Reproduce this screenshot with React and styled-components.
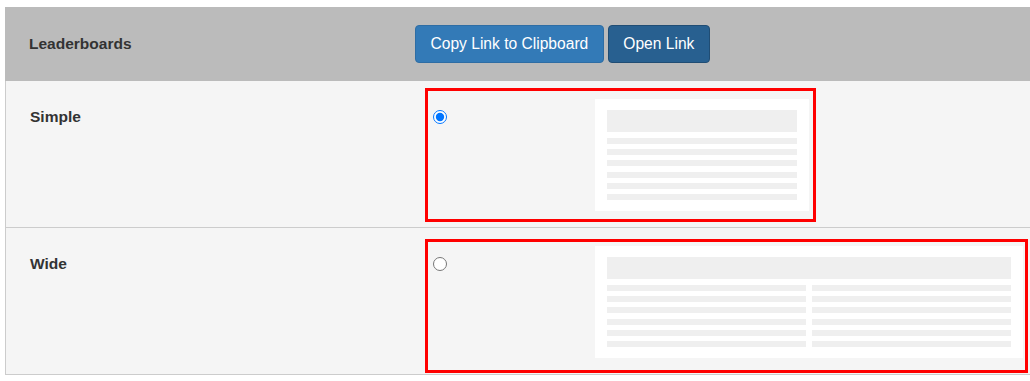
import React, { useState } from "react";
import styled, { createGlobalStyle } from "styled-components";

const GlobalStyle = createGlobalStyle`
  body {
    margin: 0;
    background: #fff;
    font-family: "Liberation Sans", Arial, sans-serif;
    color: #333;
  }
`;

const Page = styled.div`
  padding: 7px 0 0 5px;
`;

const Header = styled.div`
  display: grid;
  grid-template-columns: 410px 1fr;
  align-items: center;
  height: 74px;
  background: #bbbbbb;
`;

const HeaderTitle = styled.div`
  padding-left: 24px;
  font-size: 15.5px;
  font-weight: bold;
`;

const ButtonBar = styled.div`
  display: flex;
  gap: 4px;
`;

const Button = styled.button`
  height: 38px;
  padding: 0 14.5px;
  font-family: "Liberation Sans", Arial, sans-serif;
  font-size: 15.6px;
  color: #fff;
  background: ${(p) => (p.$active ? "#286090" : "#337ab7")};
  border: 1px solid ${(p) => (p.$active ? "#204d74" : "#2e6da4")};
  border-radius: 4px;
  cursor: pointer;
`;

const Row = styled.div`
  display: grid;
  grid-template-columns: 419px 1fr;
  align-items: start;
  height: 146px;
  background: #f5f5f5;
  border-left: 1px solid #ccc;
  border-bottom: 1px solid #ccc;
`;

const RowLabel = styled.div`
  padding: 26px 0 0 24px;
  font-size: 15.5px;
  line-height: 20px;
  font-weight: bold;
`;

const Option = styled.label`
  box-sizing: border-box;
  display: grid;
  grid-template-columns: 167px auto;
  align-items: start;
  width: ${(p) => p.$width}px;
  height: 134px;
  margin-top: ${(p) => p.$top}px;
  padding-top: ${(p) => p.$pad}px;
  border: 3px solid #ff0000;
  cursor: pointer;
`;

const Radio = styled.input`
  width: 14px;
  height: 14px;
  margin: 11px 0 0 4.5px;
`;

const Preview = styled.div`
  box-sizing: border-box;
  width: ${(p) => p.$width}px;
  height: 112px;
  padding: 11px 12px;
  background: #fff;
`;

const PreviewHead = styled.div`
  height: 22px;
  margin-bottom: 6px;
  background: #efefef;
`;

const PreviewBody = styled.div`
  display: grid;
  grid-template-columns: repeat(${(p) => p.$cols}, 1fr);
  column-gap: 6px;
`;

const PreviewCol = styled.div`
  display: flex;
  flex-direction: column;
  gap: 5.2px;
`;

const Line = styled.div`
  height: 6px;
  background: #efefef;
`;

function LayoutPreview({ width, cols }) {
  return (
    <Preview $width={width}>
      <PreviewHead />
      <PreviewBody $cols={cols}>
        {Array.from({ length: cols }).map((_, c) => (
          <PreviewCol key={c}>
            {Array.from({ length: 6 }).map((_, i) => (
              <Line key={i} />
            ))}
          </PreviewCol>
        ))}
      </PreviewBody>
    </Preview>
  );
}

const layouts = [
  { id: "simple", label: "Simple", width: 391, top: 7, pad: 8, preview: 214, cols: 1 },
  { id: "wide", label: "Wide", width: 603, top: 11, pad: 4, preview: 428, cols: 2 },
];

export default function App() {
  const [layout, setLayout] = useState("simple");

  return (
    <Page>
      <GlobalStyle />
      <Header>
        <HeaderTitle>Leaderboards</HeaderTitle>
        <ButtonBar>
          <Button>Copy Link to Clipboard</Button>
          <Button $active>Open Link</Button>
        </ButtonBar>
      </Header>
      {layouts.map((l) => (
        <Row key={l.id}>
          <RowLabel>{l.label}</RowLabel>
          <Option $width={l.width} $top={l.top} $pad={l.pad}>
            <Radio
              type="radio"
              name="layout"
              checked={layout === l.id}
              onChange={() => setLayout(l.id)}
            />
            <LayoutPreview width={l.preview} cols={l.cols} />
          </Option>
        </Row>
      ))}
    </Page>
  );
}
